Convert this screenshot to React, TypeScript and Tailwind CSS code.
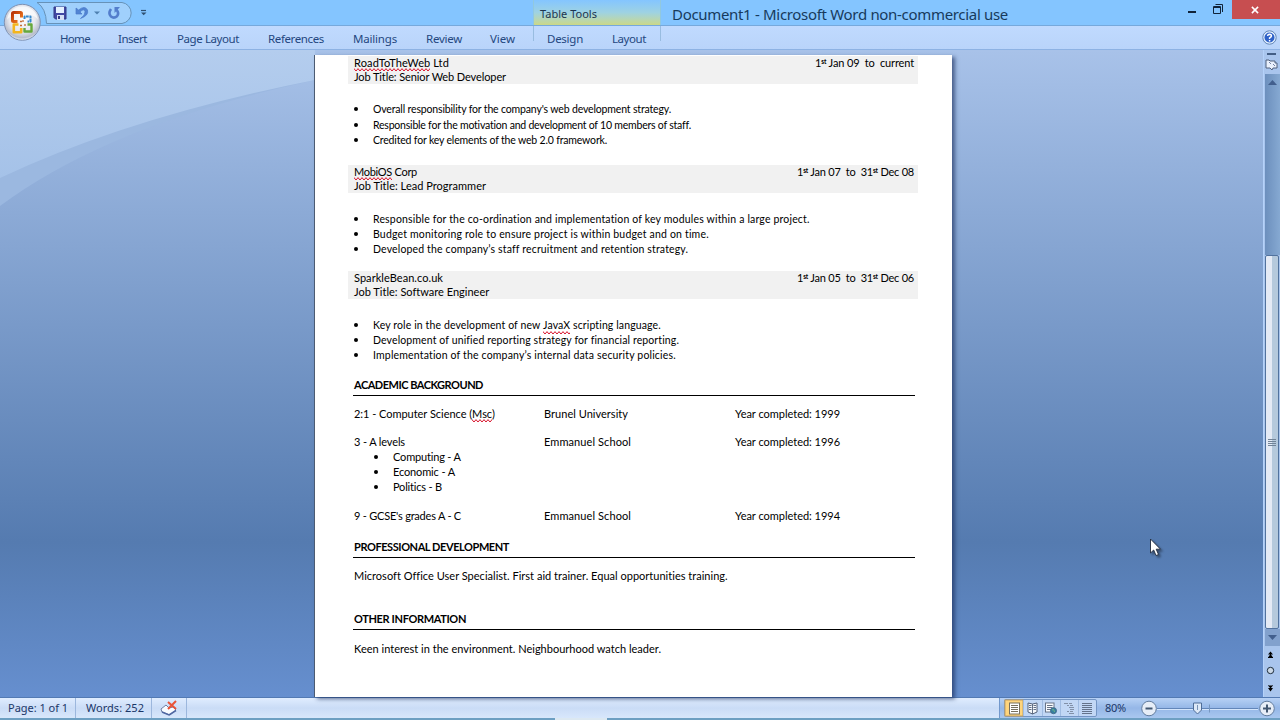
import { useLayoutEffect, useRef, type ReactNode } from "react";

/* Text set to an exact width by spreading the difference over its letters. */
function Fit({ w, className = "", children }: { w: number; className?: string; children: ReactNode }) {
  const ref = useRef<HTMLSpanElement>(null);
  useLayoutEffect(() => {
    const el = ref.current;
    if (!el) return;
    el.style.letterSpacing = "0px";
    const n = (el.textContent ?? "").length || 1;
    el.style.letterSpacing = `${(w - el.getBoundingClientRect().width) / n}px`;
  }, [w]);
  return (
    <span ref={ref} className={`inline-block shrink-0 whitespace-pre ${className}`}>
      {children}
    </span>
  );
}

function Misspelt({ children }: { children: string }) {
  return (
    <span className="relative inline-block">
      {children}
      <svg className="absolute bottom-[-2px] left-0 h-[4px] w-full" aria-hidden="true">
        <defs>
          <pattern id="squiggle" width="4" height="4" patternUnits="userSpaceOnUse">
            <path d="M-1 -.5L2 3L5 -.5" fill="none" stroke="#d8142c" strokeWidth="1" />
          </pattern>
        </defs>
        <rect width="100%" height="4" fill="url(#squiggle)" />
      </svg>
    </span>
  );
}

const St = () => <span className="relative top-[-3px] text-[6.5px] font-bold">st</span>;

function Tab({ w, ml, children }: { w: number; ml: string; children: string }) {
  return (
    <div className={ml}>
      <Fit w={w}>{children}</Fit>
    </div>
  );
}

function JobHeader({ company, cw, title, tw, dates, dw }: { company: ReactNode; cw: number; title: string; tw: number; dates: ReactNode; dw: number }) {
  return (
    <div className="ml-[33px] flex h-[28px] w-[570px] justify-between bg-[#f1f1f1] pr-[4px] pl-[6px] leading-[14px]">
      <div className="flex flex-col items-start">
        <Fit w={cw}>{company}</Fit>
        <Fit w={tw}>{title}</Fit>
      </div>
      <Fit w={dw} className="h-[14px]">{dates}</Fit>
    </div>
  );
}

function Bullets({ items }: { items: [ReactNode, number][] }) {
  return (
    <ul className="ml-[39px] text-[10.5px] leading-[16px]">
      {items.map(([text, w], i) => (
        <li key={i} className="flex h-[15px] items-center">
          <span className="mr-[15px] size-[4px] rounded-full bg-black" />
          <Fit w={w}>{text}</Fit>
        </li>
      ))}
    </ul>
  );
}

function Heading({ w, children }: { w: number; children: string }) {
  return (
    <div className="ml-[38px] h-[18px] w-[562px] border-b border-black pl-px font-bold leading-[13px]">
      <Fit w={w}>{children}</Fit>
    </div>
  );
}

function Row({ a, aw, b, bw, c }: { a: ReactNode; aw: number; b: string; bw: number; c: string }) {
  return (
    <div className="ml-[39px] grid h-[14px] grid-cols-[190px_191px_180px] leading-[14px]">
      <div><Fit w={aw}>{a}</Fit></div>
      <div><Fit w={bw}>{b}</Fit></div>
      <div><Fit w={105}>{c}</Fit></div>
    </div>
  );
}

function Orb() {
  return (
    <svg className="absolute top-[3px] left-[3px] z-10" width="39" height="39" viewBox="0 0 39 39">
      <defs>
        <radialGradient id="orb" cx=".5" cy=".4" r=".6">
          <stop offset="0" stopColor="#ffffff" />
          <stop offset=".6" stopColor="#e6e8ef" />
          <stop offset=".88" stopColor="#b7bdcc" />
          <stop offset="1" stopColor="#eef3fb" />
        </radialGradient>
        <linearGradient id="orange" x1="0" y1="0" x2="1" y2="1"><stop stopColor="#b93409" /><stop offset="1" stopColor="#f58220" /></linearGradient>
      </defs>
      <circle cx="19.3" cy="19.3" r="18" fill="url(#orb)" stroke="#7e92b3" strokeWidth="1" />
      <path d="M4 17C8 10 30 8 35 17C33 -1 6 -1 4 17Z" fill="#fff" opacity=".65" />
      <g fill="none" strokeLinejoin="round">
        <path d="M14.5 18.5H10.5Q9.5 18.5 9.5 17.5V10.5Q9.5 9.5 10.5 9.5H17.5Q18.5 9.5 18.5 10.5V14.5" stroke="url(#orange)" strokeWidth="3" />
        <path d="M21.5 16V13.5H27.5V18.5H24.5" stroke="#3387cc" strokeWidth="2" strokeDasharray="3 .7" />
        <path d="M15.5 21.5H10.8V29.2H18.2V25" stroke="#f4b51e" strokeWidth="2.6" />
        <path d="M24.5 21.5H28.5V28.5H21.5V25" stroke="#66a83b" strokeWidth="2.4" />
        <path d="M17 18.5H20M22 21V23M17 22.5H20M20 19V17" stroke="#c36b35" strokeWidth="1.3" strokeDasharray="2 1" />
      </g>
    </svg>
  );
}

function QuickAccess() {
  return (
    <svg className="ml-[36px] shrink-0" width="112" height="25" viewBox="36 0 112 25">
      <path d="M37 2.5H122A10.6 10.6 0 0 1 122 23.5H46.5Q46 8 37 2.5Z" fill="#a0d0fc" stroke="#6792b8" />
      <path d="M54 7H66V19H55.5L54 17.5Z" fill="#4248a3" stroke="#323985" />
      <rect x="56" y="7" width="8" height="6" fill="#e5f0ff" />
      <rect x="57" y="15" width="7" height="5" fill="#d5dff5" /><rect x="58" y="16" width="2" height="3" fill="#333b88" />
      <path d="M76 8V14H82L80 12Q84 8 85 11.5Q85.5 15 80.5 18.5Q89 15.5 87.5 10Q85 5 78.5 10Z" fill="#5184d3" stroke="#4b78c9" strokeWidth=".7" />
      <path d="M94 11.5H100L97 14.5Z" fill="#4e80b0" />
      <path d="M111 9Q107.8 13.5 111 16.5Q114 18.8 117 16.2Q119.5 13 116.5 9.8" fill="none" stroke="#537dcc" strokeWidth="2.6" />
      <path d="M114.5 13V7H120Z" fill="#537dcc" />
      <path d="M141 10.5H146" stroke="#2f5071" strokeWidth="1.2" /><path d="M141 12.5H146.5L143.7 15.3Z" fill="#2f5071" />
    </svg>
  );
}

function TitleBar() {
  return (
    <header className="relative flex h-[25px] bg-[#84c5ff] font-['Noto_Sans','Open_Sans',sans-serif]">
      <Orb />
      <QuickAccess />
      <div className="ml-[385px] h-[25px] w-[128px] border-x border-[#91c8df] bg-linear-to-b from-[#84c5ff] via-[#9ed2e2] to-[#cbd886] pl-[6px] text-[11px] leading-[28px] text-[#1c3450]">
        <Fit w={57}>Table Tools</Fit>
      </div>
      <div className="ml-[11px] text-[15px] leading-[28px] text-[#173a5c]">
        <Fit w={336}>Document1 - Microsoft Word non-commercial use</Fit>
      </div>
      <div className="ml-auto flex">
        <svg width="48" height="20" viewBox="1184 0 48 20" fill="none" stroke="#10243a">
          <path d="M1188 12H1196" strokeWidth="2" />
          <path d="M1213.5 6.5H1220.5V13.5H1213.5ZM1213 7.5H1221M1215.5 4.5H1222.5V12" />
        </svg>
        <div className="flex h-[19px] w-[48px] items-center justify-center bg-[#c74e50]">
          <svg width="8" height="8" viewBox="0 0 9 9" className="mr-[2px]"><path d="M1 1L8 8M8 1L1 8" stroke="#fff" strokeWidth="1.7" /></svg>
        </div>
      </div>
    </header>
  );
}

function RibbonTabs() {
  return (
    <nav className="flex h-[25px] border-t border-b border-t-[#76a9dc] border-b-[#8db2e3] bg-linear-to-b from-[#c0dafe] to-[#b9d4fa] font-['Noto_Sans','Open_Sans',sans-serif] text-[11.5px] leading-[25px] text-[#244780]">
      <Tab ml="ml-[60px]" w={30}>Home</Tab>
      <Tab ml="ml-[28px]" w={29}>Insert</Tab>
      <Tab ml="ml-[30px]" w={62}>Page Layout</Tab>
      <Tab ml="ml-[29px]" w={56}>References</Tab>
      <Tab ml="ml-[29px]" w={44}>Mailings</Tab>
      <Tab ml="ml-[29px]" w={36}>Review</Tab>
      <Tab ml="ml-[28px]" w={25}>View</Tab>
      <div className="ml-[18px] flex h-[15px] w-[128px] border-x border-[#98bce0]">
        <Tab ml="ml-[13px]" w={36}>Design</Tab>
        <Tab ml="ml-[29px]" w={34}>Layout</Tab>
      </div>
      <svg className="mt-[4px] mr-[3px] ml-auto" width="15" height="15" viewBox="0 0 15 15">
        <circle cx="7.5" cy="7.5" r="6.7" fill="#e5f2ff" stroke="#5f83b5" />
        <circle cx="7.5" cy="7.5" r="5" fill="#2f62c8" />
        <path d="M5.6 6Q5.8 4.2 7.6 4.2Q9.6 4.3 9.4 6Q9.2 7 7.6 7.8V9M7.6 10V11.4" fill="none" stroke="#fff" strokeWidth="1.5" />
      </svg>
    </nav>
  );
}

function Page() {
  return (
    <main className="mt-[5px] h-[642px] w-[638px] shrink-0 overflow-hidden border-l border-[#4c5b72] bg-white pt-px font-['Lato',sans-serif] text-[11px] text-black shadow-[3px_2px_4px_rgba(25,45,90,0.65)]">
      <div>
        <JobHeader company={<><Misspelt>RoadToTheWeb</Misspelt> Ltd</>} cw={95} title="Job Title: Senior Web Developer" tw={152} dates={<>1<St /> Jan 09  to  current</>} dw={99} />
        <div className="mt-[17px]">
          <Bullets items={[["Overall responsibility for the company's web development strategy.", 298]]} />
          <div className="mt-px">
            <Bullets items={[["Responsible for the motivation and development of 10 members of staff.", 318], ["Credited for key elements of the web 2.0 framework.", 234]]} />
          </div>
        </div>
        <div className="mt-[18px]">
          <JobHeader company={<><Misspelt>MobiOS</Misspelt> Corp</>} cw={63} title="Job Title: Lead Programmer" tw={132} dates={<>1<St /> Jan 07  to  31<St /> Dec 08</>} dw={117} />
        </div>
        <div className="mt-[18px]">
          <Bullets items={[["Responsible for the co-ordination and implementation of key modules within a large project.", 437], ["Budget monitoring role to ensure project is within budget and on time.", 336], ["Developed the company’s staff recruitment and retention strategy.", 315]]} />
        </div>
        <div className="mt-[15px]">
          <JobHeader company="SparkleBean.co.uk" cw={89} title="Job Title: Software Engineer" tw={135} dates={<>1<St /> Jan 05  to  31<St /> Dec 06</>} dw={117} />
        </div>
        <div className="mt-[18px]">
          <Bullets items={[[<>Key role in the development of new <Misspelt>JavaX</Misspelt> scripting language.</>, 288], ["Development of unified reporting strategy for financial reporting.", 306], ["Implementation of the company’s internal data security policies.", 303]]} />
        </div>
        <div className="mt-[16px]"><Heading w={129}>ACADEMIC BACKGROUND</Heading></div>
        <div className="mt-[11px]">
          <Row a={<>2:1 - Computer Science (<Misspelt>Msc</Misspelt>)</>} aw={141} b="Brunel University" bw={84} c="Year completed: 1999" />
        </div>
        <div className="mt-[14px]">
          <Row a="3 - A levels" aw={51} b="Emmanuel School" bw={87} c="Year completed: 1996" />
        </div>
        <ul className="ml-[59px] leading-[15px]">
          {([["Computing - A", 68], ["Economic - A", 62], ["Politics - B", 49]] as [string, number][]).map(([t, w]) => (
            <li key={t} className="flex h-[15px] items-center">
              <span className="mr-[15px] size-[4px] rounded-full bg-black" />
              <Fit w={w}>{t}</Fit>
            </li>
          ))}
        </ul>
        <div className="mt-[15px]">
          <Row a="9 - GCSE's grades A - C" aw={107} b="Emmanuel School" bw={87} c="Year completed: 1994" />
        </div>
        <div className="mt-[17px]"><Heading w={155}>PROFESSIONAL DEVELOPMENT</Heading></div>
        <div className="mt-[11px] ml-[39px] h-[14px] leading-[14px]">
          <Fit w={373}>Microsoft Office User Specialist. First aid trainer. Equal opportunities training.</Fit>
        </div>
        <div className="mt-[29px]"><Heading w={112}>OTHER INFORMATION</Heading></div>
        <div className="mt-[12px] ml-[39px] h-[14px] leading-[14px]">
          <Fit w={307}>Keen interest in the environment. Neighbourhood watch leader.</Fit>
        </div>
      </div>
    </main>
  );
}

function ScrollBar() {
  return (
    <aside className="ml-auto flex w-[17px] flex-col items-center border-l border-[#b5d2fa] bg-[#a9c5ed]">
      <svg width="16" height="24" viewBox="0 -1 16 24">
        <path d="M3 3H12" stroke="#435e85" strokeWidth="2" />
        <path d="M2 9H5L6 10H11V12H13V17H9L8 19L6 17H2Z" fill="#e9f0fc" stroke="#50607d" />
        <path d="M5 11L7 13M9 13L11 15" stroke="#7482a5" />
      </svg>
      <div className="flex h-[181px] w-[15px] flex-col items-center bg-linear-to-r from-[#6c8fbd] to-[#86a9d2] pt-[6px]">
        <svg width="9" height="5" viewBox="0 0 9 5"><path d="M0 5L4.5 0L9 5Z" fill="#425f8d" /></svg>
      </div>
      <div className="flex h-[374px] w-[14px] shrink-0 flex-col items-center justify-center gap-px rounded-[2px] border border-[#51729e] bg-linear-to-r from-[#e4eaf5] from-50% to-[#b5c9dc] to-50%">
        <span className="h-px w-[8px] bg-[#718397]" />
        <span className="h-px w-[8px] bg-[#718397]" />
        <span className="h-px w-[8px] bg-[#718397]" />
        <span className="h-px w-[8px] bg-[#718397]" />
      </div>
      <div className="flex h-[17px] w-[15px] shrink-0 items-center justify-center bg-[#82a1cd]">
        <svg width="9" height="5" viewBox="0 0 9 5"><path d="M0 0H9L4.5 5Z" fill="#425f8d" /></svg>
      </div>
      <svg className="mr-[3px] shrink-0" width="13" height="50" viewBox="0 0 13 50">
        <path d="M4 8.5L6.5 5.5L9 8.5ZM4 11.500L6.500 8L9 11.500ZM4 11H9V12H4Z" fill="#000" />
        <circle cx="6.5" cy="24.500" r="3.2" fill="#cbd8e6" stroke="#1b2b3b" />
        <path d="M4 39.500L6.500 42.500L9 39.500ZM4 42L6.500 45.500L9 42ZM4 39H9V40H4Z" fill="#000" />
      </svg>
    </aside>
  );
}

function ViewButtons() {
  return (
    <svg className="shrink-0" width="94" height="18" viewBox="0 0 94 18">
      <rect x=".5" y=".5" width="92" height="17" rx="1.5" fill="#c1d7f5" stroke="#7395c4" />
      <rect x="1" y="1" width="18" height="16" fill="#ffd57d" stroke="#c5a061" />
      <path d="M19.5 1V17M38.5 1V17M56.5 1V17M74.5 1V17" stroke="#a0bce2" />
      <rect x="5.5" y="4" width="10" height="11" fill="#fff" stroke="#77705f" />
      <path d="M7 6.5H14M7 8.5H14M7 10.5H14M7 12.5H14" stroke="#77705f" />
      <path d="M28.5 5L24 4V13L28.5 15L33 13V4Z" fill="#f5f8fc" stroke="#526078" />
      <path d="M28.5 5V15M25 6.5H27.5M25 8.5H27.5M25 10.5H27.5M29.5 6.5H32M29.5 8.5H32M29.5 10.5H32" stroke="#526078" strokeWidth=".9" />
      <rect x="41.500" y="4" width="8.500" height="9" fill="#f8fbff" stroke="#687487" />
      <path d="M43 6.500H48.500M43 8.500H48.500M43 10.500H47" stroke="#687487" />
      <circle cx="49.500" cy="11.700" r="3" fill="#347fa1" stroke="#456c8b" /><path d="M48 11Q50 9 50.500 13" fill="none" stroke="#73b384" />
      <path d="M60 4.500H64M65 4.500H68M63 6.500H65M66 6.500H69M65 8.500H70M66 10.500H70M63 12.500H65M66 12.500H69M65 14.500H70" stroke="#7b899f" strokeWidth=".9" />
      <path d="M78 4.500H88M78 6.500H88M78 8.500H88M78 10.500H88M78 12.500H88M78 14.500H88" stroke="#59687f" strokeWidth=".9" />
    </svg>
  );
}

function StatusBar() {
  return (
    <footer className="flex h-[23px] flex-col">
      <div className="flex h-[21px] shrink-0 border-t border-[#537ab3] bg-linear-to-b from-[#e0edff] via-[#cadcf6] to-[#d8e7fb] font-['Noto_Sans','Open_Sans',sans-serif] text-[11px] leading-[20px] text-[#1b3768]">
        <div className="w-[76px] border-r border-[#9cb7dd] pl-[8px]"><Fit w={60}>Page: 1 of 1</Fit></div>
        <div className="w-[76px] border-r border-[#9cb7dd] pl-[10px]"><Fit w={58}>Words: 252</Fit></div>
        <div className="w-[35px] border-r border-[#9cb7dd] pt-[2px] pl-[8px]">
          <svg width="18" height="17" viewBox="0 0 18 17">
            <path d="M1 9L6 5L9 8L13 7L16 10L10 15L2 12Z" fill="#f8fbff" stroke="#6f7fa5" />
            <path d="M2 12L9 15L16 10.500" fill="none" stroke="#4f67a2" strokeWidth="1.500" />
            <path d="M8 2L16 9M16 1L8 9" stroke="#e95337" strokeWidth="2" />
          </svg>
        </div>
        <div className="ml-auto flex w-[281px] items-start border-l border-[#7298cc] bg-linear-to-b from-[#b7d1f5] via-[#95b7e7] to-[#a9c7ef] pt-px">
          <div className="ml-[4px]"><ViewButtons /></div>
          <div className="ml-[7px] leading-[18px]"><Fit w={21}>80%</Fit></div>
          <svg className="ml-[14px] shrink-0" width="138" height="19" viewBox="1140 0 138 19" fill="none">
            <path d="M1157 9.500H1258" stroke="#6286b9" /><path d="M1157 10.500H1258" stroke="#d4e5fb" />
            <path d="M1209.500 5.500V13.500" stroke="#7797c0" />
            <circle cx="1149" cy="9.500" r="7.300" fill="#e6edf7" stroke="#627c9e" /><path d="M1145.500 9.500H1152.500" stroke="#425771" strokeWidth="2" />
            <path d="M1193.500 4H1201.500V11L1197.500 15L1193.500 11Z" fill="#dce8f7" stroke="#4f6d98" /><path d="M1197.500 6V11" stroke="#7892b5" />
            <circle cx="1267" cy="9.500" r="7.300" fill="#e6edf7" stroke="#627c9e" /><path d="M1263 9.500H1271M1267 5.500V13.500" stroke="#425771" strokeWidth="2" />
          </svg>
        </div>
      </div>
      <div className="flex h-[2px] justify-center bg-[#6d9fc2]">
        <span className="ml-[-118px] h-[2px] w-[52px] bg-[#dce8f1]" />
      </div>
    </footer>
  );
}

export default function App() {
  return (
    <div className="flex h-[720px] w-[1280px] flex-col overflow-hidden">
      <TitleBar />
      <RibbonTabs />
      <section className="relative flex h-[647px] bg-linear-to-b from-[#a8c2e9] from-0% via-[#557bb0] via-76% to-[#668fcf] to-100%">
        <svg className="absolute top-0 left-0" width="315" height="160" viewBox="0 50 315 160">
          <defs>
            <linearGradient id="sky" x1="0" y1="0" x2="0" y2="1"><stop stopColor="#b4cdee" /><stop offset="1" stopColor="#a5c2e8" /></linearGradient>
          </defs>
          <path d="M0 50H315V80Q110 124 0 206Z" fill="#9bb8e0" />
          <path d="M0 50H315V80Q132 116 0 178Z" fill="url(#sky)" />
        </svg>
        <div className="relative ml-[314px] flex"><Page /></div>
        <ScrollBar />
        <svg className="absolute top-[487px] left-[1148px] drop-shadow-[2px_2px_1px_rgba(0,0,0,0.4)]" width="15" height="22" viewBox="0 0 15 22">
          <path d="M2.500 2V16L5.700 13L8 18.500L10.500 17.500L8.200 12.200H12.500Z" fill="#fff" stroke="#202a3c" strokeWidth=".9" />
        </svg>
      </section>
      <StatusBar />
    </div>
  );
}
